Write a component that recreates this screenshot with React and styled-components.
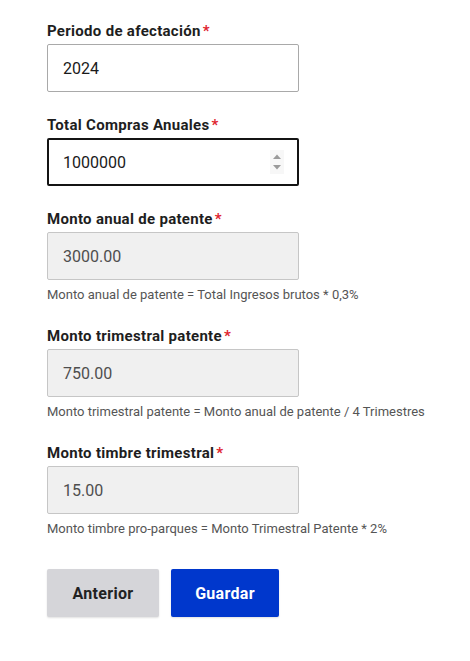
import React from "react";
import styled, { createGlobalStyle } from "styled-components";

const GlobalStyle = createGlobalStyle`
  body {
    margin: 0;
    background: #ffffff;
    font-family: Roboto, "Liberation Sans", sans-serif;
  }
`;

function App() {
  return (
    <>
      <GlobalStyle />
      <Form>
        <Group>
          <Label>Periodo de afectación<Req>*</Req></Label>
          <Input value="2024" readOnly />
        </Group>

        <Group>
          <Label>Total Compras Anuales<Req>*</Req></Label>
          <FieldWrap>
            <Input value="1000000" readOnly focused />
            <Spinner>
              <svg width="14" height="24" viewBox="0 0 14 24">
                <path d="M3 9 L7 4.5 L11 9 Z" fill="#9a9a9a" />
                <path d="M3 15 L7 19.5 L11 15 Z" fill="#9a9a9a" />
              </svg>
            </Spinner>
          </FieldWrap>
        </Group>

        <Group>
          <Label>Monto anual de patente<Req>*</Req></Label>
          <Input value="3000.00" readOnly disabled />
          <Help>Monto anual de patente = Total Ingresos brutos * 0,3%</Help>
        </Group>

        <Group>
          <Label>Monto trimestral patente<Req>*</Req></Label>
          <Input value="750.00" readOnly disabled />
          <Help>Monto trimestral patente = Monto anual de patente / 4 Trimestres</Help>
        </Group>

        <Group>
          <Label>Monto timbre trimestral<Req>*</Req></Label>
          <Input value="15.00" readOnly disabled />
          <Help>Monto timbre pro-parques = Monto Trimestral Patente * 2%</Help>
        </Group>

        <Buttons>
          <Button width="112px">Anterior</Button>
          <Button width="108px" primary>Guardar</Button>
        </Buttons>
      </Form>
    </>
  );
}

const Form = styled.div`
  padding: 21px 47px 40px 47px;
  display: flex;
  flex-direction: column;
`;

const Group = styled.div`
  display: flex;
  flex-direction: column;
  margin-bottom: 23px;
`;

const Label = styled.label`
  font-size: 15px;
  font-weight: 700;
  line-height: 20px;
  letter-spacing: 0.3px;
  color: #1e1e1e;
  margin-bottom: 3px;
`;

const Req = styled.span`
  color: #e0242e;
  margin-left: 2px;
`;

const FieldWrap = styled.div`
  position: relative;
  width: 252px;
`;

const Input = styled.input`
  box-sizing: border-box;
  width: 252px;
  height: 48px;
  border: ${(p) => (p.focused ? "2px solid #141414" : "1px solid #a9a9a9")};
  padding: 0 14px 0 ${(p) => (p.focused ? "14px" : "15px")};
  border-radius: 2px;
  background: #ffffff;
  font-family: Roboto, "Liberation Sans", sans-serif;
  font-size: 16px;
  color: #1a1a1a;
  outline: none;

  &:disabled {
    background: #f0f0f0;
    border-color: #c6c6c6;
    color: #4e4e4e;
  }
`;

const Spinner = styled.div`
  position: absolute;
  right: 15px;
  top: 12px;
  width: 14px;
  height: 24px;
  background: #f7f7f7;
  display: flex;
`;

const Help = styled.div`
  margin-top: 7px;
  font-size: 13px;
  line-height: 16px;
  color: #555555;
  white-space: nowrap;
`;

const Buttons = styled.div`
  display: flex;
  gap: 12px;
  margin-top: 9px;
`;

const Button = styled.button`
  width: ${(p) => p.width};
  height: 48px;
  padding: 0;
  border: none;
  border-radius: 2px;
  font-family: Roboto, "Liberation Sans", sans-serif;
  font-size: 16px;
  font-weight: 700;
  letter-spacing: 0.3px;
  background: ${(p) => (p.primary ? "#0037cc" : "#d5d5d9")};
  color: ${(p) => (p.primary ? "#ffffff" : "#222222")};
  box-shadow: 0 1px 2px rgba(0, 0, 0, 0.12);
`;

export default App;
